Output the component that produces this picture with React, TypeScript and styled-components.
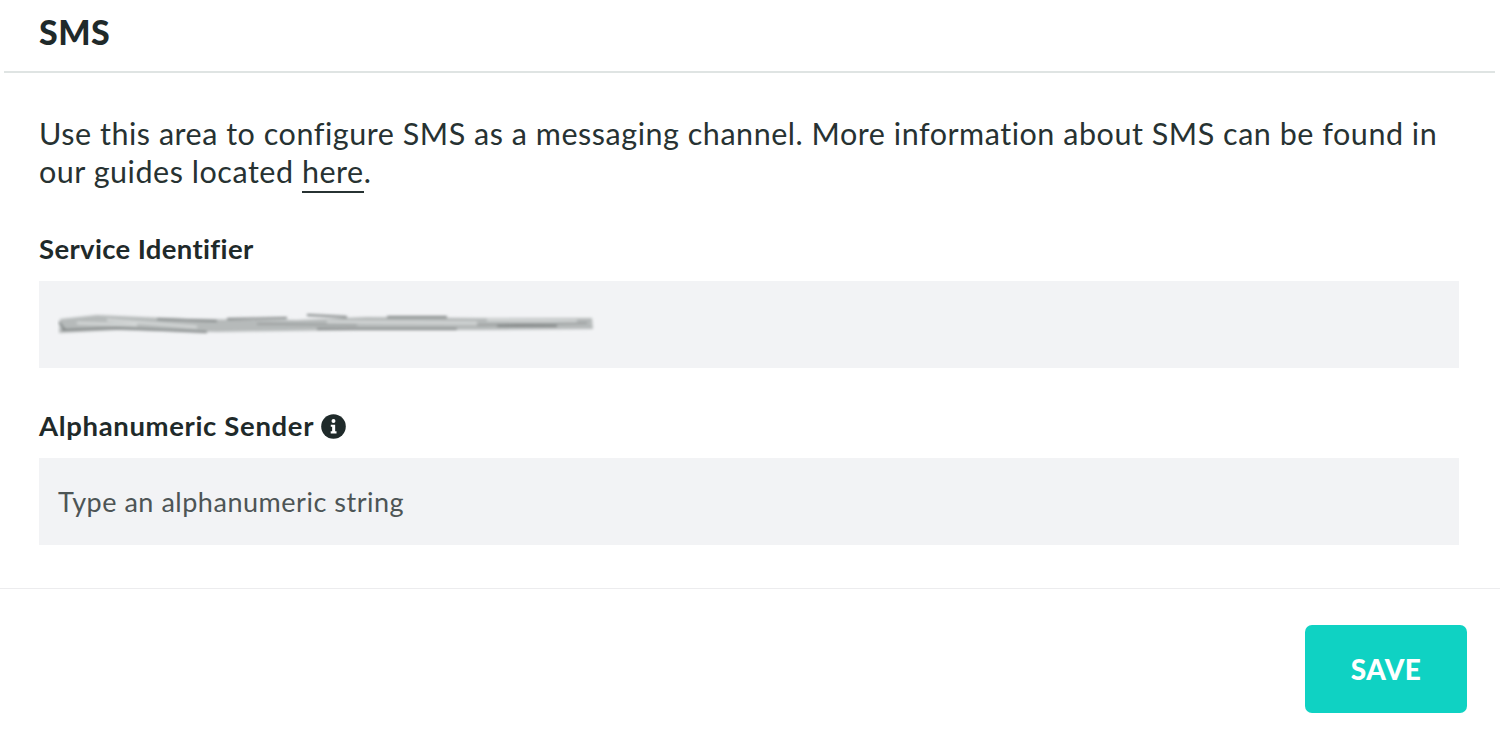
import React from "react";
import styled, { createGlobalStyle } from "styled-components";

const Global = createGlobalStyle`
  html, body { margin: 0; padding: 0; background: #fff; }
  body { font-family: "Lato", "Liberation Sans", sans-serif; color: #1f2a2a; }
  #root { width: 1500px; height: 744px; overflow: hidden; }
`;
const Page = styled.div`display:flex;flex-direction:column;width:1500px;height:744px;`;
const Header = styled.header`
  height: 73px; margin: 0 5px 0 4px; padding-left: 35px; box-sizing: border-box;
  border-bottom: 2px solid #dfe4e3; display:flex; align-items:flex-start;
`;
const Title = styled.h1`margin: 12px 0 0; font-size: 34px; line-height: 40px; font-weight: 900; letter-spacing: .5px; color:#1f2a2a;`;
const Body = styled.main`padding: 41px 41px 0 39px; display:flex; flex-direction:column;`;
const Intro = styled.p`
  margin: 0; font-size: 30.5px; line-height: 38px; font-weight: 400; letter-spacing: .53px; color:#273232; width: 1420px;
`;
const Link = styled.a`color: inherit; text-decoration: none; border-bottom: 2px solid #273232; padding-bottom: 2px;`;
const Label = styled.label`
  display:flex; align-items:center; gap:7px; font-size: 27.5px; line-height: 34px; font-weight: 700; color:#1f2a2a;
  letter-spacing: ${p => p.$track}px;
  margin: ${p => p.$top}px 0 15px;
`;
const Field = styled.div`
  height: 87px; background:#f2f3f5; display:flex; align-items:center; padding-left: 19px;
  font-size: 27px; letter-spacing: .52px; color:#4d5555;
`;
const Footer = styled.footer`
  margin-top: 43px; border-top: 1px solid #ececee; padding: 36px 33px 0 0; display:flex; justify-content:flex-end;
`;
const Save = styled.button`
  width:162px; height:88px; border:0; border-radius:7px; background:#0fd2c3; color:#fff;
  font: 900 28px "Lato", sans-serif; letter-spacing: .4px; padding:0;
`;
const Smear = () => (
  <svg width="540" height="30" viewBox="0 0 540 30" style={{ marginLeft: -1 }}>
    <defs><filter id="b" x="-2%" y="-30%" width="104%" height="160%"><feGaussianBlur stdDeviation="1.5" /></filter></defs>
    <g filter="url(#b)">
      <path d="M3 9 L40 5 L130 9 L240 10 L310 7 L420 8 L535 8 L536 19 L420 20 L300 20 L160 22 L60 20 L2 23Z" fill="#b6baba" />
      <path d="M5 20 L60 18 L150 22 M170 9 L230 8 M250 5 L290 7 M330 7 L390 7 M440 16 L500 16 M260 19 L400 19 M100 9 L160 11 M2 12 L8 20" stroke="#7b8080" strokeWidth="1.8" fill="none" />
      <path d="M50 10 L140 17 M270 12 L420 13 M20 13 L80 15 M430 10 L520 11" stroke="#d6d9d9" strokeWidth="2.4" fill="none" />
      <path d="M200 14 L300 15 M420 15 L530 13" stroke="#929696" strokeWidth="1.6" fill="none" />
    </g>
  </svg>
);
const Info = () => (
  <svg width="25" height="25" viewBox="0 0 24 24">
    <circle cx="12" cy="12" r="11.8" fill="#1f2a2a" />
    <circle cx="12" cy="6.8" r="1.9" fill="#fff" />
    <path d="M9.4 10.2h4.2v6.4h1.3v2H9.3v-2h1.4v-4.4H9.4z" fill="#fff" />
  </svg>
);

export default function App() {
  return (
    <Page>
      <Global />
      <Header><Title>SMS</Title></Header>
      <Body>
        <Intro>
          Use this area to configure SMS as a messaging channel. More information about SMS can be found in our guides located <Link href="#">here</Link>.
        </Intro>
        <Label $top={42} $track={0.35}>Service Identifier</Label>
        <Field><Smear /></Field>
        <Label $top={41} $track={0.65}>Alphanumeric Sender <Info /></Label>
        <Field>Type an alphanumeric string</Field>
      </Body>
      <Footer><Save>SAVE</Save></Footer>
    </Page>
  );
}
